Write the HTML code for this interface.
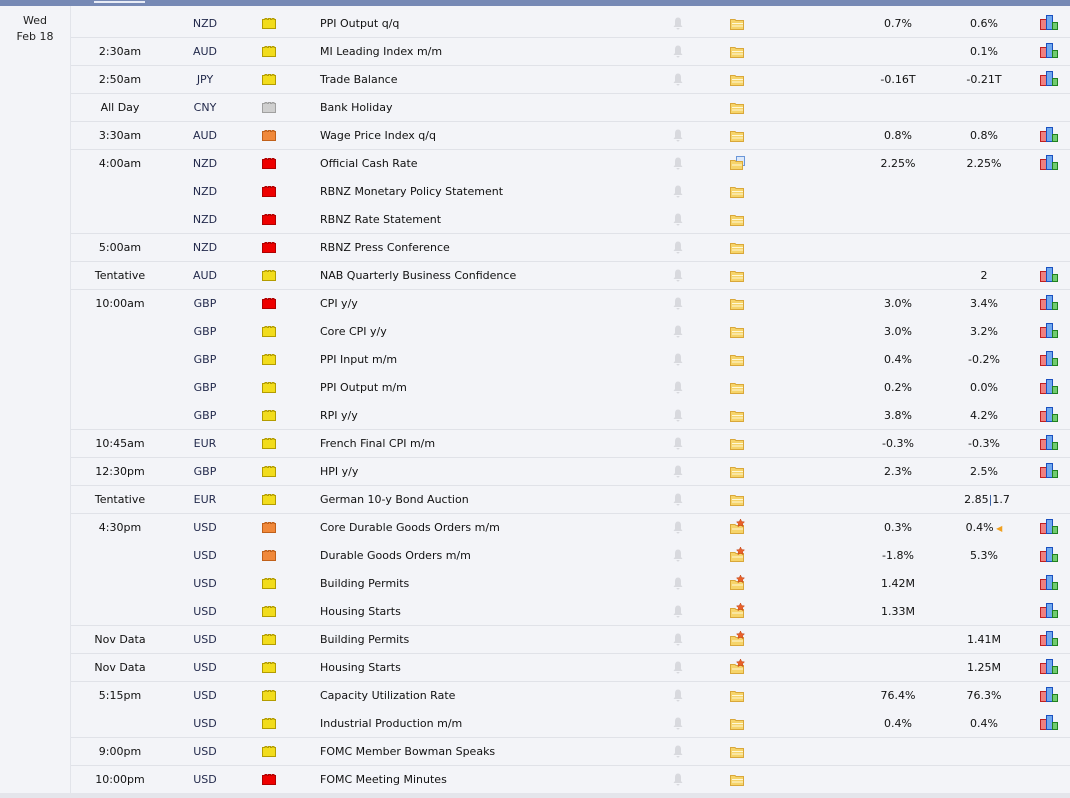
<!DOCTYPE html>
<html><head><meta charset="utf-8">
<style>
*{margin:0;padding:0;box-sizing:border-box}
body{width:1070px;height:798px;background:#f3f4f8;font-family:"DejaVu Sans","Liberation Sans",sans-serif;font-size:11px;color:#111;position:relative;overflow:hidden}
#top{position:absolute;left:0;top:0;width:1070px;height:6px;background:#7689b5}
#top i{position:absolute;left:94px;top:1px;width:51px;height:2px;background:#e8ecf6}
#vl{position:absolute;left:70px;top:6px;width:1px;height:792px;background:#e2e4ea}
#day{position:absolute;left:0;top:13px;width:70px;text-align:center;line-height:16px;color:#222}
#rows{position:absolute;left:71px;top:9px;width:999px}
.r{position:relative;height:28px;line-height:27px;padding-top:1px}
.r.s{border-top:1px solid #e0e2e8;padding-top:0}
.r.s .im,.r.s .b,.r.s .f,.r.s .g{margin-top:-1px}
.t{position:absolute;left:0;width:98px;text-align:center}
.c{position:absolute;left:114px;width:40px;text-align:center;color:#232a4c}
.im{position:absolute;left:191px;top:9px;width:14px;height:11px}
.e{position:absolute;left:249px}
.b{position:absolute;left:601px;top:8px;width:12px;height:13px}
.f{position:absolute;left:658px;top:6px;width:17px;height:16px}
.a{position:absolute;left:787px;width:80px;text-align:center}
.fc{position:absolute;left:873px;width:80px;text-align:center}
.g{position:absolute;left:969px;top:6px;width:18px;height:15px}
#bot{position:absolute;left:0;top:793px;width:1070px;height:5px;background:#e4e5eb}
</style></head><body>
<div id="top"><i></i></div>
<div id="vl"></div>
<div id="day">Wed<br>Feb 18</div>
<svg width="0" height="0" style="position:absolute">
<defs>
<symbol id="iy" viewBox="0 0 14 11"><path d="M0.5 10.5V1.5H3V0.5H5V1.5H6.5V0.5H8.5V1.5H10V0.5H12V1.5H13.5V10.5Z" fill="#f2dc1c" stroke="#b39c00"/></symbol>
<symbol id="io" viewBox="0 0 14 11"><path d="M0.5 10.5V1.5H3V0.5H5V1.5H6.5V0.5H8.5V1.5H10V0.5H12V1.5H13.5V10.5Z" fill="#f0883a" stroke="#c0601a"/></symbol>
<symbol id="ir" viewBox="0 0 14 11"><path d="M0.5 10.5V1.5H3V0.5H5V1.5H6.5V0.5H8.5V1.5H10V0.5H12V1.5H13.5V10.5Z" fill="#ee0000" stroke="#b00000"/></symbol>
<symbol id="ig" viewBox="0 0 14 11"><path d="M0.5 10.5V1.5H3V0.5H5V1.5H6.5V0.5H8.5V1.5H10V0.5H12V1.5H13.5V10.5Z" fill="#cfcfcf" stroke="#a0a0a0"/></symbol>
<symbol id="bl" viewBox="0 0 12 13"><path d="M6 0.5C4 0.5 3 2 3 4.5V8L1.5 10H10.5L9 8V4.5C9 2 8 0.5 6 0.5Z M4.5 11H7.5C7.5 12 6.8 12.5 6 12.5S4.5 12 4.5 11Z" fill="#d8d9de"/></symbol>
<symbol id="fo" viewBox="0 0 17 16"><path d="M1.5 14.5V4.5H6L7 5.5H14.5V14.5Z" fill="#f6d46a" stroke="#d9a73a"/><rect x="3" y="8" width="11" height="1" fill="#fff8d8"/><rect x="3" y="10.5" width="11" height="1" fill="#fff8d8"/></symbol>
<symbol id="fs" viewBox="0 0 17 16"><path d="M1.5 14.5V5.5H6L7 6.5H14.5V14.5Z" fill="#f6d46a" stroke="#d9a73a"/><rect x="3" y="9.5" width="11" height="1" fill="#fff8d8"/><path d="M11.5 0L12.7 2.6L15.5 2.9L13.5 4.8L14.1 7.6L11.5 6.2L8.9 7.6L9.5 4.8L7.5 2.9L10.3 2.6Z" fill="#e8602a" stroke="#c04010" stroke-width=".5"/></symbol>
<symbol id="fb" viewBox="0 0 17 16"><rect x="7.5" y="1.5" width="8" height="9" fill="#dce8fa" stroke="#6a96d8"/><path d="M1.5 14.5V5.5H6L7 6.5H13.5V14.5Z" fill="#f6d46a" stroke="#d9a73a"/><rect x="3" y="9.5" width="10" height="1" fill="#fff8d8"/></symbol>
<symbol id="ch" viewBox="0 0 18 15"><rect x="0.5" y="4.5" width="6" height="10" fill="#f08080" stroke="#c02020"/><rect x="6.5" y="0.5" width="6" height="14" fill="#6fa8ee" stroke="#1a50c0"/><rect x="12.5" y="7.5" width="5" height="7" fill="#70cc70" stroke="#208020"/></symbol>
</defs></svg>
<div id="rows">
<div class="r"><span class="t"></span><span class="c">NZD</span><svg class="im"><use href="#iy"/></svg><span class="e">PPI Output q/q</span><svg class="b"><use href="#bl"/></svg><svg class="f"><use href="#fo"/></svg><span class="a">0.7%</span><span class="fc">0.6%</span><svg class="g"><use href="#ch"/></svg></div>
<div class="r s"><span class="t">2:30am</span><span class="c">AUD</span><svg class="im"><use href="#iy"/></svg><span class="e">MI Leading Index m/m</span><svg class="b"><use href="#bl"/></svg><svg class="f"><use href="#fo"/></svg><span class="a"></span><span class="fc">0.1%</span><svg class="g"><use href="#ch"/></svg></div>
<div class="r s"><span class="t">2:50am</span><span class="c">JPY</span><svg class="im"><use href="#iy"/></svg><span class="e">Trade Balance</span><svg class="b"><use href="#bl"/></svg><svg class="f"><use href="#fo"/></svg><span class="a">-0.16T</span><span class="fc">-0.21T</span><svg class="g"><use href="#ch"/></svg></div>
<div class="r s"><span class="t">All Day</span><span class="c">CNY</span><svg class="im"><use href="#ig"/></svg><span class="e">Bank Holiday</span><svg class="f"><use href="#fo"/></svg></div>
<div class="r s"><span class="t">3:30am</span><span class="c">AUD</span><svg class="im"><use href="#io"/></svg><span class="e">Wage Price Index q/q</span><svg class="b"><use href="#bl"/></svg><svg class="f"><use href="#fo"/></svg><span class="a">0.8%</span><span class="fc">0.8%</span><svg class="g"><use href="#ch"/></svg></div>
<div class="r s"><span class="t">4:00am</span><span class="c">NZD</span><svg class="im"><use href="#ir"/></svg><span class="e">Official Cash Rate</span><svg class="b"><use href="#bl"/></svg><svg class="f"><use href="#fb"/></svg><span class="a">2.25%</span><span class="fc">2.25%</span><svg class="g"><use href="#ch"/></svg></div>
<div class="r"><span class="c">NZD</span><svg class="im"><use href="#ir"/></svg><span class="e">RBNZ Monetary Policy Statement</span><svg class="b"><use href="#bl"/></svg><svg class="f"><use href="#fo"/></svg></div>
<div class="r"><span class="c">NZD</span><svg class="im"><use href="#ir"/></svg><span class="e">RBNZ Rate Statement</span><svg class="b"><use href="#bl"/></svg><svg class="f"><use href="#fo"/></svg></div>
<div class="r s"><span class="t">5:00am</span><span class="c">NZD</span><svg class="im"><use href="#ir"/></svg><span class="e">RBNZ Press Conference</span><svg class="b"><use href="#bl"/></svg><svg class="f"><use href="#fo"/></svg></div>
<div class="r s"><span class="t">Tentative</span><span class="c">AUD</span><svg class="im"><use href="#iy"/></svg><span class="e">NAB Quarterly Business Confidence</span><svg class="b"><use href="#bl"/></svg><svg class="f"><use href="#fo"/></svg><span class="fc">2</span><svg class="g"><use href="#ch"/></svg></div>
<div class="r s"><span class="t">10:00am</span><span class="c">GBP</span><svg class="im"><use href="#ir"/></svg><span class="e">CPI y/y</span><svg class="b"><use href="#bl"/></svg><svg class="f"><use href="#fo"/></svg><span class="a">3.0%</span><span class="fc">3.4%</span><svg class="g"><use href="#ch"/></svg></div>
<div class="r"><span class="c">GBP</span><svg class="im"><use href="#iy"/></svg><span class="e">Core CPI y/y</span><svg class="b"><use href="#bl"/></svg><svg class="f"><use href="#fo"/></svg><span class="a">3.0%</span><span class="fc">3.2%</span><svg class="g"><use href="#ch"/></svg></div>
<div class="r"><span class="c">GBP</span><svg class="im"><use href="#iy"/></svg><span class="e">PPI Input m/m</span><svg class="b"><use href="#bl"/></svg><svg class="f"><use href="#fo"/></svg><span class="a">0.4%</span><span class="fc">-0.2%</span><svg class="g"><use href="#ch"/></svg></div>
<div class="r"><span class="c">GBP</span><svg class="im"><use href="#iy"/></svg><span class="e">PPI Output m/m</span><svg class="b"><use href="#bl"/></svg><svg class="f"><use href="#fo"/></svg><span class="a">0.2%</span><span class="fc">0.0%</span><svg class="g"><use href="#ch"/></svg></div>
<div class="r"><span class="c">GBP</span><svg class="im"><use href="#iy"/></svg><span class="e">RPI y/y</span><svg class="b"><use href="#bl"/></svg><svg class="f"><use href="#fo"/></svg><span class="a">3.8%</span><span class="fc">4.2%</span><svg class="g"><use href="#ch"/></svg></div>
<div class="r s"><span class="t">10:45am</span><span class="c">EUR</span><svg class="im"><use href="#iy"/></svg><span class="e">French Final CPI m/m</span><svg class="b"><use href="#bl"/></svg><svg class="f"><use href="#fo"/></svg><span class="a">-0.3%</span><span class="fc">-0.3%</span><svg class="g"><use href="#ch"/></svg></div>
<div class="r s"><span class="t">12:30pm</span><span class="c">GBP</span><svg class="im"><use href="#iy"/></svg><span class="e">HPI y/y</span><svg class="b"><use href="#bl"/></svg><svg class="f"><use href="#fo"/></svg><span class="a">2.3%</span><span class="fc">2.5%</span><svg class="g"><use href="#ch"/></svg></div>
<div class="r s"><span class="t">Tentative</span><span class="c">EUR</span><svg class="im"><use href="#iy"/></svg><span class="e">German 10-y Bond Auction</span><svg class="b"><use href="#bl"/></svg><svg class="f"><use href="#fo"/></svg><span class="fc" style="left:876px">2.85<b style="font-weight:normal;color:#2a56a0">|</b>1.7</span></div>
<div class="r s"><span class="t">4:30pm</span><span class="c">USD</span><svg class="im"><use href="#io"/></svg><span class="e">Core Durable Goods Orders m/m</span><svg class="b"><use href="#bl"/></svg><svg class="f"><use href="#fs"/></svg><span class="a">0.3%</span><span class="fc">0.4%<span style="color:#f0a020;font-size:8px"> ◀</span></span><svg class="g"><use href="#ch"/></svg></div>
<div class="r"><span class="c">USD</span><svg class="im"><use href="#io"/></svg><span class="e">Durable Goods Orders m/m</span><svg class="b"><use href="#bl"/></svg><svg class="f"><use href="#fs"/></svg><span class="a">-1.8%</span><span class="fc">5.3%</span><svg class="g"><use href="#ch"/></svg></div>
<div class="r"><span class="c">USD</span><svg class="im"><use href="#iy"/></svg><span class="e">Building Permits</span><svg class="b"><use href="#bl"/></svg><svg class="f"><use href="#fs"/></svg><span class="a">1.42M</span><svg class="g"><use href="#ch"/></svg></div>
<div class="r"><span class="c">USD</span><svg class="im"><use href="#iy"/></svg><span class="e">Housing Starts</span><svg class="b"><use href="#bl"/></svg><svg class="f"><use href="#fs"/></svg><span class="a">1.33M</span><svg class="g"><use href="#ch"/></svg></div>
<div class="r s"><span class="t">Nov Data</span><span class="c">USD</span><svg class="im"><use href="#iy"/></svg><span class="e">Building Permits</span><svg class="b"><use href="#bl"/></svg><svg class="f"><use href="#fs"/></svg><span class="fc">1.41M</span><svg class="g"><use href="#ch"/></svg></div>
<div class="r s"><span class="t">Nov Data</span><span class="c">USD</span><svg class="im"><use href="#iy"/></svg><span class="e">Housing Starts</span><svg class="b"><use href="#bl"/></svg><svg class="f"><use href="#fs"/></svg><span class="fc">1.25M</span><svg class="g"><use href="#ch"/></svg></div>
<div class="r s"><span class="t">5:15pm</span><span class="c">USD</span><svg class="im"><use href="#iy"/></svg><span class="e">Capacity Utilization Rate</span><svg class="b"><use href="#bl"/></svg><svg class="f"><use href="#fo"/></svg><span class="a">76.4%</span><span class="fc">76.3%</span><svg class="g"><use href="#ch"/></svg></div>
<div class="r"><span class="c">USD</span><svg class="im"><use href="#iy"/></svg><span class="e">Industrial Production m/m</span><svg class="b"><use href="#bl"/></svg><svg class="f"><use href="#fo"/></svg><span class="a">0.4%</span><span class="fc">0.4%</span><svg class="g"><use href="#ch"/></svg></div>
<div class="r s"><span class="t">9:00pm</span><span class="c">USD</span><svg class="im"><use href="#iy"/></svg><span class="e">FOMC Member Bowman Speaks</span><svg class="b"><use href="#bl"/></svg><svg class="f"><use href="#fo"/></svg></div>
<div class="r s"><span class="t">10:00pm</span><span class="c">USD</span><svg class="im"><use href="#ir"/></svg><span class="e">FOMC Meeting Minutes</span><svg class="b"><use href="#bl"/></svg><svg class="f"><use href="#fo"/></svg></div>
</div>
<div id="bot"></div>
</body></html>
